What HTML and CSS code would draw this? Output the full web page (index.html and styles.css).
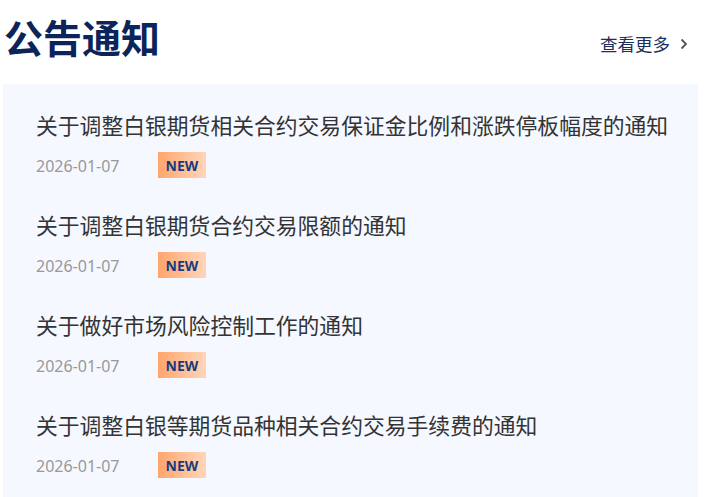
FILE: index.html
```html
<!DOCTYPE html>
<html lang="zh">
<head>
<meta charset="utf-8">
<link rel="stylesheet" href="styles.css">
</head>
<body>
<div class="header">
  <h1 class="title">公告通知</h1>
  <a class="more" href="#">查看更多<svg class="chev" width="8" height="12" viewBox="0 0 8 12"><path d="M1.5 1.5 L6 6 L1.5 10.5" fill="none" stroke="#555" stroke-width="1.8"/></svg></a>
</div>
<div class="panel">
  <div class="item">
    <div class="item-title">关于调整白银期货相关合约交易保证金比例和涨跌停板幅度的通知</div>
    <div class="meta"><span class="date">2026-01-07</span><span class="badge">NEW</span></div>
  </div>
  <div class="item">
    <div class="item-title">关于调整白银期货合约交易限额的通知</div>
    <div class="meta"><span class="date">2026-01-07</span><span class="badge">NEW</span></div>
  </div>
  <div class="item">
    <div class="item-title">关于做好市场风险控制工作的通知</div>
    <div class="meta"><span class="date">2026-01-07</span><span class="badge">NEW</span></div>
  </div>
  <div class="item">
    <div class="item-title">关于调整白银等期货品种相关合约交易手续费的通知</div>
    <div class="meta"><span class="date">2026-01-07</span><span class="badge">NEW</span></div>
  </div>
</div>
</body>
</html>
```
FILE: styles.css
```css
html, body {
  margin: 0;
  padding: 0;
  background: #ffffff;
  font-family: "Noto Sans", "Noto Sans CJK SC", sans-serif;
  overflow: hidden;
}
.header {
  height: 84px;
  display: flex;
  align-items: flex-start;
  justify-content: space-between;
  padding: 0 17px 0 4px;
  box-sizing: border-box;
}
.title {
  margin: 0;
  padding-top: 11px;
  font-family: "Noto Sans CJK SC", sans-serif;
  font-size: 39px;
  line-height: 50px;
  font-weight: 700;
  color: #0b2459;
}
.more {
  margin-top: 31px;
  display: flex;
  align-items: center;
  gap: 10px;
  font-family: "Noto Sans CJK SC", sans-serif;
  font-size: 17.5px;
  line-height: 26px;
  color: #1a2f5c;
  text-decoration: none;
}
.panel {
  margin: 0 7px 0 3px;
  background: #f5f8ff;
  padding: 26px 0 20px 33px;
  height: 420px;
  box-sizing: border-box;
}
.item {
  height: 100px;
}
.item-title {
  font-family: "Noto Sans CJK SC", sans-serif;
  font-size: 21.8px;
  line-height: 30px;
  color: #333333;
  white-space: nowrap;
}
.meta {
  margin-top: 12px;
  display: flex;
  align-items: center;
  height: 26px;
}
.date {
  width: 122px;
  font-size: 16px;
  line-height: 26px;
  padding-top: 2px;
  color: #999999;
}
.badge {
  width: 48px;
  height: 26px;
  display: flex;
  align-items: center;
  justify-content: center;
  background: linear-gradient(90deg, #ffa56c 0%, #ffd6ba 100%);
  color: #173b80;
  font-size: 14px;
  font-weight: 700;
}
```
